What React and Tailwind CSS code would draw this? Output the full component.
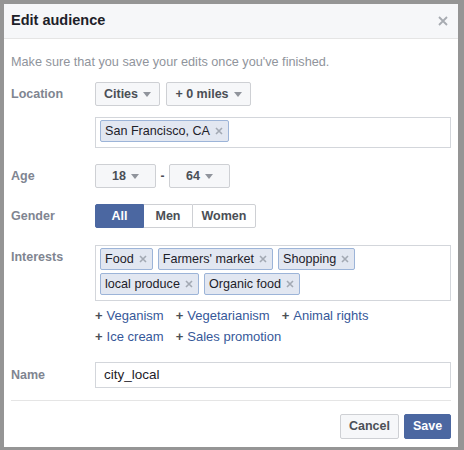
import React from "react";

const font = { fontFamily: '"Liberation Sans", Arial, Helvetica, sans-serif' };

const Caret = () => (
  <svg width="8" height="5" viewBox="0 0 8 5" className="ml-[5px]">
    <path d="M0 0 L8 0 L4 5 Z" fill="#90949c" />
  </svg>
);

const DropButton = ({ children, className }) => (
  <button
    className={`flex h-[24px] items-center justify-center rounded-[2px] border border-[#ced0d4] bg-[#f6f7f9] text-[12.5px] font-bold text-[#4b4f56] ${className}`}
  >
    {children}
    <Caret />
  </button>
);

const Token = ({ label }) => (
  <span className="flex h-[22px] items-center rounded-[2px] border border-[#9cb4d8] bg-[#e2e7f1] pl-[4px] pr-[5px] text-[12.6px] text-[#1d2129]">
    {label}
    <svg width="8" height="8" viewBox="0 0 8 8" className="ml-[5px]">
      <path d="M1 1 L7 7 M7 1 L1 7" stroke="#a3a9b3" strokeWidth="1.6" />
    </svg>
  </span>
);

const Label = ({ children, className }) => (
  <div className={`w-[84px] shrink-0 text-[12.5px] font-bold text-[#7f8591] ${className}`}>{children}</div>
);

const Suggestion = ({ label }) => (
  <span className="flex items-center text-[13px]">
    <span className="mr-[4px] font-bold text-[#4b4f56]">+</span>
    <span className="text-[#365899]">{label}</span>
  </span>
);

export default function App() {
  const interests = ["Food", "Farmers' market", "Shopping", "local produce", "Organic food"];
  const suggestionRows = [
    ["Veganism", "Vegetarianism", "Animal rights"],
    ["Ice cream", "Sales promotion"],
  ];

  return (
    <div style={font} className="h-[450px] w-[464px] bg-[#959595] pb-[3px] pl-[4px] pr-[6px] pt-[4px]">
      <div className="flex h-full flex-col overflow-hidden bg-white">
        <div className="flex h-[35px] shrink-0 items-center justify-between border-b border-[#e5e5e5] bg-[#f6f7f9] pl-[7px] pr-[10px]">
          <span className="text-[14.5px] font-bold text-[#1d2129]">Edit audience</span>
          <svg width="10" height="10" viewBox="0 0 10 10">
            <path d="M1 1 L9 9 M9 1 L1 9" stroke="#a7abb1" strokeWidth="1.8" />
          </svg>
        </div>

        <div className="flex flex-col px-[7px]">
          <p className="mt-[15px] text-[12.7px] leading-[16px] text-[#90949c]">
            Make sure that you save your edits once you've finished.
          </p>

          <div className="mt-[12px] flex">
            <Label className="pt-[3px]">Location</Label>
            <div className="flex flex-1 flex-col">
              <div className="flex gap-[6px]">
                <DropButton className="w-[65px]">Cities</DropButton>
                <DropButton className="w-[85px]">+ 0 miles</DropButton>
              </div>
              <div className="mt-[11px] flex h-[31px] items-start border border-[#d3d6db] pl-[4px] pt-[2px]">
                <Token label="San Francisco, CA" />
              </div>
            </div>
          </div>

          <div className="mt-[16px] flex">
            <Label className="pt-[3px]">Age</Label>
            <div className="flex items-center">
              <DropButton className="w-[61px]">18</DropButton>
              <span className="w-[13px] text-center text-[12px] font-bold text-[#4b4f56]">-</span>
              <DropButton className="w-[61px]">64</DropButton>
            </div>
          </div>

          <div className="mt-[16px] flex">
            <Label className="pt-[3px]">Gender</Label>
            <div className="flex h-[24px] text-[12.5px] font-bold">
              <button className="w-[49px] rounded-l-[2px] border border-[#4b67a1] bg-[#4b67a1] text-white">All</button>
              <button className="w-[48px] border-y border-[#ced0d4] bg-white text-[#4b4f56]">Men</button>
              <button className="w-[64px] rounded-r-[2px] border border-[#ced0d4] bg-white text-[#4b4f56]">Women</button>
            </div>
          </div>

          <div className="mt-[17px] flex">
            <Label className="pt-[3px]">Interests</Label>
            <div className="flex flex-1 flex-col">
              <div className="flex h-[56px] flex-wrap content-start gap-x-[5px] gap-y-[3px] border border-[#d3d6db] pl-[4px] pt-[2px]">
                {interests.map((i) => (
                  <Token key={i} label={i} />
                ))}
              </div>
              <div className="mt-[4px] flex flex-col leading-[21px]">
                {suggestionRows.map((row, r) => (
                  <div key={r} className="flex gap-x-[12px]">
                    {row.map((s) => (
                      <Suggestion key={s} label={s} />
                    ))}
                  </div>
                ))}
              </div>
            </div>
          </div>

          <div className="mt-[15px] flex">
            <Label className="pt-[4px]">Name</Label>
            <div className="flex h-[26px] flex-1 items-center border border-[#d3d6db] pl-[8px] text-[13.5px] text-[#1d2129]">
              city_local
            </div>
          </div>

          <div className="mt-[12px] border-t border-[#e5e5e5]" />

          <div className="mt-[13px] flex justify-end gap-[5px]">
            <button className="h-[25px] w-[59px] rounded-[2px] border border-[#ced0d4] bg-[#f6f7f9] text-[12.5px] font-bold text-[#4b4f56]">
              Cancel
            </button>
            <button className="h-[25px] w-[47px] rounded-[2px] border border-[#4b67a1] bg-[#4b67a1] text-[12.5px] font-bold text-white">
              Save
            </button>
          </div>
        </div>
      </div>
    </div>
  );
}
